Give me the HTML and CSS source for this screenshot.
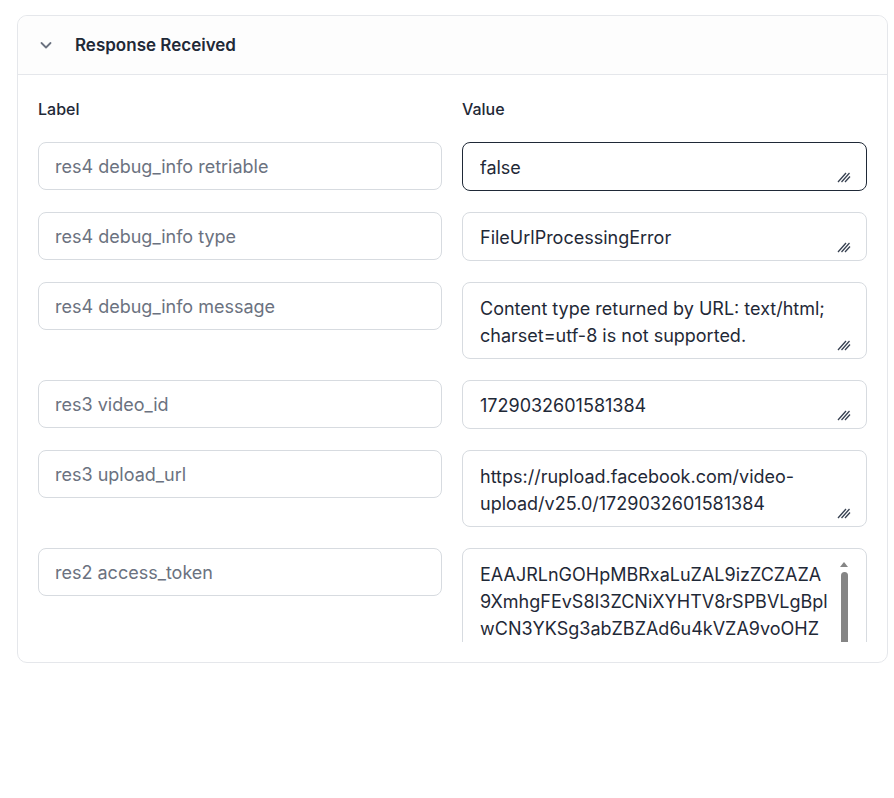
FILE: index.html
```html
<!DOCTYPE html>
<html lang="en">
<head>
  <meta charset="UTF-8" />
  <meta name="viewport" content="width=device-width, initial-scale=1.0"/>
  <title>Response Received</title>
  <link rel="stylesheet" href="styles.css">
</head>
<body>

  <section class="panel">
    <!-- Collapsible header -->
    <div class="panel-header">
      <svg class="chevron" width="14" height="14" viewBox="0 0 14 14" fill="none">
        <path d="M2.5 5l4.5 4.5L11.5 5" stroke="#6b7280" stroke-width="1.8" stroke-linecap="round" stroke-linejoin="round"/>
      </svg>
      <span class="panel-title">Response Received</span>
    </div>

    <div class="panel-body">
      <div class="fields">
        <div class="col-head">Label</div>
        <div class="col-head">Value</div>

        <input class="key" type="text" placeholder="res4 debug_info retriable">
        <div class="val-box focused">
          <textarea class="val" rows="1">false</textarea>
          <svg class="grip" width="14" height="12" viewBox="0 0 14 12"><path d="M1 11L9 2M4.5 11L12.5 2M8 11L13 5.5"/></svg>
        </div>

        <input class="key" type="text" placeholder="res4 debug_info type">
        <div class="val-box">
          <textarea class="val" rows="1">FileUrlProcessingError</textarea>
          <svg class="grip" width="14" height="12" viewBox="0 0 14 12"><path d="M1 11L9 2M4.5 11L12.5 2M8 11L13 5.5"/></svg>
        </div>

        <input class="key" type="text" placeholder="res4 debug_info message">
        <div class="val-box multi">
          <textarea class="val" rows="2">Content type returned by URL: text/html; charset=utf-8 is not supported.</textarea>
          <svg class="grip" width="14" height="12" viewBox="0 0 14 12"><path d="M1 11L9 2M4.5 11L12.5 2M8 11L13 5.5"/></svg>
        </div>

        <input class="key" type="text" placeholder="res3 video_id">
        <div class="val-box">
          <textarea class="val" rows="1">1729032601581384</textarea>
          <svg class="grip" width="14" height="12" viewBox="0 0 14 12"><path d="M1 11L9 2M4.5 11L12.5 2M8 11L13 5.5"/></svg>
        </div>

        <input class="key" type="text" placeholder="res3 upload_url">
        <div class="val-box multi">
          <textarea class="val" rows="2">https://rupload.facebook.com/video-upload/v25.0/1729032601581384</textarea>
          <svg class="grip" width="14" height="12" viewBox="0 0 14 12"><path d="M1 11L9 2M4.5 11L12.5 2M8 11L13 5.5"/></svg>
        </div>

        <input class="key" type="text" placeholder="res2 access_token">
        <div class="val-box multi">
          <textarea class="val token" rows="5">EAAJRLnGOHpMBRxaLuZAL9izZCZAZA9XmhgFEvS8I3ZCNiXYHTV8rSPBVLgBplwCN3YKSg3abZBZAd6u4kVZA9voOHZBm0ZCq7ZAZBnX1kyWZC3dJkR8bZAQhZBt5Tq6ZAvB0ZCdZBZAmZCkWZAZA2rZBpLxUZA4cZB7aZBZCyZAE5iGZBnQ7xPpZCZAZBmFZA9kZCZD</textarea>
          <!-- scrollbar of the token field -->
          <div class="vscroll">
            <span class="vscroll-up"></span>
            <span class="vscroll-thumb"></span>
          </div>
        </div>
      </div>
    </div>
  </section>

</body>
</html>
```

FILE: styles.css
```css
body {
  margin: 0;
  padding: 15px 0 0 17px;
  background: #fff;
  font-family: 'Inter', 'Liberation Sans', sans-serif;
  color: #1f2937;
}

.panel {
  width: 869px;
  border: 1px solid #e5e7eb;
  border-radius: 10px;
  background: #fff;
}

.panel-header {
  display: flex;
  align-items: center;
  gap: 22px;
  height: 58px;
  padding: 0 21px;
  border-bottom: 1px solid #e5e7eb;
  background: #fdfdfd;
  border-radius: 10px 10px 0 0;
}

.chevron {
  flex-shrink: 0;
}

.panel-title {
  font-size: 17px;
  font-weight: 600;
  color: #1f2937;
}

.panel-body {
  padding: 22px 20px 20px;
}

.fields {
  display: grid;
  grid-template-columns: 404px 405px;
  column-gap: 20px;
  row-gap: 21px;
  align-items: start;
  height: 545px;
  overflow: hidden;
}

.col-head {
  font-size: 16px;
  line-height: 24px;
  font-weight: 500;
  color: #1f2937;
}

.key {
  box-sizing: border-box;
  width: 100%;
  height: 48px;
  margin: 0;
  padding: 10px 16px;
  font-family: inherit;
  font-size: 18px;
  line-height: 27px;
  border: 1px solid #d7dbe0;
  border-radius: 8px;
  background: #fff;
  color: #1f2937;
  outline: none;
}

.key::placeholder {
  color: #6b7280;
}

.val-box {
  position: relative;
  border: 1px solid #d7dbe0;
  border-radius: 8px;
  background: #fff;
  padding: 11px 14px 4px 17px;
}

.val-box.multi {
  padding-top: 12px;
}

.val-box.focused {
  border-color: #1f2937;
}

.val {
  display: block;
  box-sizing: border-box;
  width: 100%;
  margin: 0;
  padding: 0 0 5px;
  border: none;
  outline: none;
  background: transparent;
  font-family: inherit;
  font-size: 18px;
  line-height: 27px;
  color: #1f2937;
  resize: none;
  overflow: hidden;
}

.val.token {
  padding-right: 23px;
  word-break: break-all;
}

.grip {
  position: absolute;
  right: 15px;
  bottom: 7px;
  fill: none;
  stroke: #374151;
  stroke-width: 1.3;
}

.vscroll {
  position: absolute;
  top: 13px;
  right: 18px;
  width: 8px;
  display: flex;
  flex-direction: column;
  align-items: center;
  gap: 5px;
}

.vscroll-up {
  width: 0;
  height: 0;
  border-left: 4px solid transparent;
  border-right: 4px solid transparent;
  border-bottom: 5px solid #858585;
}

.vscroll-thumb {
  width: 7px;
  height: 120px;
  border-radius: 4px;
  background: #858585;
}
```
